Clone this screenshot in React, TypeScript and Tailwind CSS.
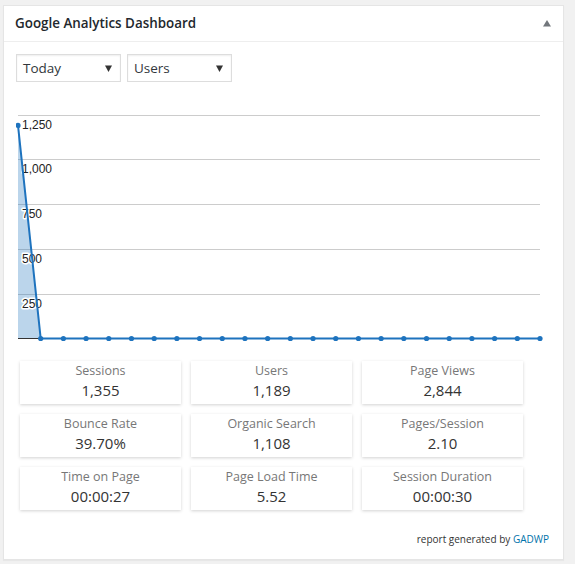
const font = { fontFamily: '"Open Sans", "Noto Sans", Arial, sans-serif' };

const stats = [
  { label: "Sessions", value: "1,355" },
  { label: "Users", value: "1,189" },
  { label: "Page Views", value: "2,844" },
  { label: "Bounce Rate", value: "39.70%" },
  { label: "Organic Search", value: "1,108" },
  { label: "Pages/Session", value: "2.10" },
  { label: "Time on Page", value: "00:00:27" },
  { label: "Page Load Time", value: "5.52" },
  { label: "Session Duration", value: "00:00:30" },
];

// hourly users for today
const data = [1189, ...Array(23).fill(0)];

function Select({ text }: { text: string }) {
  return (
    <div className="flex h-[28px] w-[105px] items-center justify-between border border-[#dddddd] bg-white pl-[6px] pr-[8px] shadow-[inset_0_1px_2px_rgba(0,0,0,0.07)]">
      <span className="text-[13.5px] text-[#32373c]">{text}</span>
      <svg width="7" height="7" viewBox="0 0 7 7">
        <polygon points="0,0.5 7,0.5 3.5,7" fill="#333" />
      </svg>
    </div>
  );
}

function Chart() {
  const base = 238.5;
  const step = 44.8;
  const left = 2;
  const right = 524;
  const dx = (right - left) / (data.length - 1);
  const pts = data.map((v, i) => [left + i * dx, base - (v / 250) * step] as const);
  const line = pts.map((p) => `${p[0]},${p[1]}`).join(" ");
  const area = `${left},${base} ${line} ${right},${base}`;
  const ticks = [1250, 1000, 750, 500, 250];

  return (
    <svg width="532" height="250" className="block">
      {ticks.map((t, i) => {
        const y = Math.round(base - (5 - i) * step) + 0.5;
        return <line key={t} x1={left} x2={right} y1={y} y2={y} stroke="#cccccc" strokeWidth="1" />;
      })}
      <polygon points={area} fill="#1e73be" fillOpacity="0.3" />
      <line x1={left} x2={right} y1={base} y2={base} stroke="#333" strokeWidth="1" />
      {ticks.map((t, i) => {
        const y = Math.round(base - (5 - i) * step) + 14;
        return (
          <text
            key={t}
            x="6"
            y={y}
            fontFamily="Arial, 'Liberation Sans', sans-serif"
            fontSize="12"
            fill="#222"
            stroke="#fff"
            strokeWidth="3"
            strokeLinejoin="round"
            style={{ paintOrder: "stroke" }}
          >
            {t.toLocaleString("en-US")}
          </text>
        );
      })}
      <polyline points={line} fill="none" stroke="#1e73be" strokeWidth="2" />
      {pts.map((p, i) => (
        <circle key={i} cx={p[0]} cy={p[1]} r="2.6" fill="#1e73be" />
      ))}
    </svg>
  );
}

export default function App() {
  return (
    <div className="min-h-[564px] bg-[#f1f1f1] pl-[3px] pt-[5px]" style={font}>
      <div className="w-[561px] h-[555px] border border-[#e5e5e5] bg-white shadow-[0_1px_1px_rgba(0,0,0,0.04)]">
        <div className="flex h-[36px] items-center justify-between border-b border-[#eeeeee] pl-[11px] pr-[12px]">
          <h2 className="text-[13.4px] font-semibold text-[#23282d]">Google Analytics Dashboard</h2>
          <svg width="8" height="7" viewBox="0 0 8 7">
            <polygon points="4,0 8,6.5 0,6.5" fill="#72777c" />
          </svg>
        </div>

        <div className="pl-[12px] pr-[14px] pt-[12px]">
          <div className="flex gap-[6px]">
            <Select text="Today" />
            <Select text="Users" />
          </div>

          <div className="mt-[18px]">
            <Chart />
          </div>

          <div className="mt-[11px] ml-[4px] grid w-[503px] grid-cols-3 gap-x-[10px] gap-y-[10px]">
            {stats.map((s) => (
              <div
                key={s.label}
                className="flex h-[43px] flex-col items-center bg-white pt-[1px] shadow-[0_1px_3px_rgba(0,0,0,0.18)]"
              >
                <span className="text-[12.5px] leading-[17px] text-[#777777]">{s.label}</span>
                <span className="text-[15px] leading-[22px] text-[#333333]">{s.value}</span>
              </div>
            ))}
          </div>

          <div className="mt-[22px] text-right text-[10px] leading-[15px] text-[#333]">
            report generated by <span className="text-[#0073aa]">GADWP</span>
          </div>
        </div>
      </div>
    </div>
  );
}
